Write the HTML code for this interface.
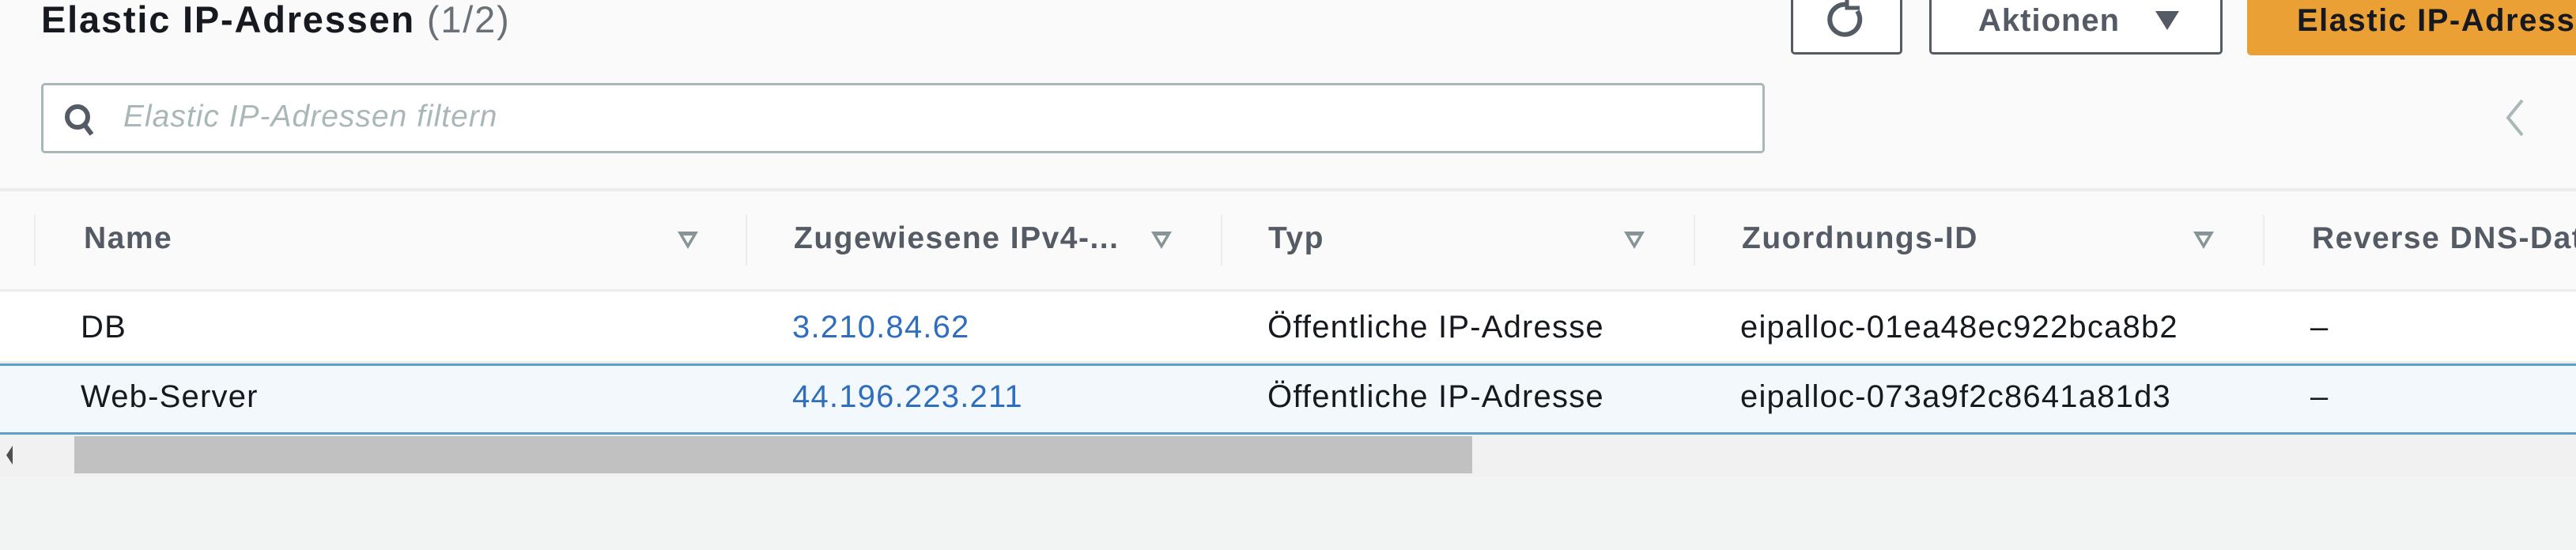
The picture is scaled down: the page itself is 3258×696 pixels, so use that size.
<!DOCTYPE html>
<html><head><meta charset="utf-8"><style>
*{margin:0;padding:0;box-sizing:border-box}
body{width:3258px;height:696px;overflow:hidden;background:#f2f3f3;font-family:"Liberation Sans",sans-serif;position:relative}
.a{position:absolute;white-space:nowrap}
.tri{position:absolute;width:0;height:0;border-left:13px solid transparent;border-right:13px solid transparent;border-top:22px solid #879596}
.tri:after{content:"";position:absolute;left:-6px;top:-17px;border-left:6px solid transparent;border-right:6px solid transparent;border-top:10px solid #fafafa}
.sep{position:absolute;top:272px;width:2px;height:64px;background:#eaeded}
.h{font-size:39px;font-weight:bold;color:#545b64;top:280px;letter-spacing:1.5px}
.c{font-size:40px;color:#16191f;letter-spacing:1.2px}
.l{color:#2f6ebf}
</style></head><body>
<div class="a" style="left:0;top:0;width:3258px;height:552px;background:#fafafa"></div>
<div class="a" style="left:52px;top:-3px;font-size:47px;font-weight:bold;color:#16191f;letter-spacing:1.8px">Elastic IP-Adressen <span style="font-weight:normal;color:#687078">(1/2)</span></div>
<!-- buttons -->
<div class="a" style="left:2265px;top:-6px;width:141px;height:75px;border:3px solid #545b64;border-radius:5px;background:#fff"></div>
<svg class="a" style="left:2309px;top:0" width="54" height="52" viewBox="0 0 54 52"><path d="M40 14 A19 19 0 1 1 28 6" fill="none" stroke="#545b64" stroke-width="6"/><path d="M27 0 V10 H43" fill="none" stroke="#545b64" stroke-width="5"/></svg>
<div class="a" style="left:2440px;top:-6px;width:371px;height:75px;border:3px solid #545b64;border-radius:5px;background:#fff"></div>
<div class="a" style="left:2502px;top:4px;font-size:40px;font-weight:bold;color:#545b64;letter-spacing:1px">Aktionen</div>
<div class="a" style="left:2726px;top:14px;border-left:15px solid transparent;border-right:15px solid transparent;border-top:24px solid #545b64"></div>
<div class="a" style="left:2842px;top:-6px;width:430px;height:76px;background:#eaa034;border-radius:5px"></div>
<div class="a" style="left:2905px;top:4px;font-size:40px;font-weight:bold;color:#16191f;letter-spacing:1.5px">Elastic IP-Adressen</div>
<!-- search -->
<div class="a" style="left:52px;top:105px;width:2180px;height:89px;border:3px solid #aab7b8;border-radius:5px;background:#fff"></div>
<svg class="a" style="left:78px;top:128px" width="48" height="48" viewBox="0 0 48 48"><circle cx="20" cy="20" r="13" fill="none" stroke="#545b64" stroke-width="6"/><path d="M29 30 L38 42" stroke="#545b64" stroke-width="6"/></svg>
<div class="a" style="left:156px;top:126px;font-size:39px;font-style:italic;color:#aab7b8;letter-spacing:1px">Elastic IP-Adressen filtern</div>
<svg class="a" style="left:3164px;top:124px" width="34" height="50" viewBox="0 0 34 50"><path d="M26 3 L8 25 L26 47" fill="none" stroke="#aab7b8" stroke-width="4"/></svg>
<!-- header -->
<div class="a" style="left:0;top:238px;width:3258px;height:4px;background:#eaeded"></div>
<div class="a" style="left:0;top:366px;width:3258px;height:3px;background:#eaeded"></div>
<div class="sep" style="left:43px"></div><div class="sep" style="left:943px"></div><div class="sep" style="left:1544px"></div><div class="sep" style="left:2142px"></div><div class="sep" style="left:2862px"></div>
<div class="a h" style="left:106px">Name</div>
<div class="a h" style="left:1004px">Zugewiesene IPv4-...</div>
<div class="a h" style="left:1604px">Typ</div>
<div class="a h" style="left:2203px">Zuordnungs-ID</div>
<div class="a h" style="left:2924px">Reverse DNS-Datensatz</div>
<div class="tri" style="left:857px;top:293px"></div>
<div class="tri" style="left:1456px;top:293px"></div>
<div class="tri" style="left:2054px;top:293px"></div>
<div class="tri" style="left:2774px;top:293px"></div>
<!-- rows -->
<div class="a" style="left:0;top:369px;width:3258px;height:88px;background:#fff"></div>
<div class="a" style="left:0;top:457px;width:3258px;height:3px;background:#eaeded"></div>
<div class="a" style="left:0;top:460px;width:3258px;height:3px;background:#5aa0c8"></div>
<div class="a" style="left:0;top:463px;width:3258px;height:84px;background:#f3f8fd"></div>
<div class="a" style="left:0;top:547px;width:3258px;height:3px;background:#5aa0c8"></div>
<div class="a c" style="left:102px;top:392px">DB</div>
<div class="a c l" style="left:1002px;top:392px">3.210.84.62</div>
<div class="a c" style="left:1603px;top:392px">Öffentliche IP-Adresse</div>
<div class="a c" style="left:2201px;top:392px">eipalloc-01ea48ec922bca8b2</div>
<div class="a c" style="left:2922px;top:392px">–</div>
<div class="a c" style="left:102px;top:480px">Web-Server</div>
<div class="a c l" style="left:1002px;top:480px">44.196.223.211</div>
<div class="a c" style="left:1603px;top:480px">Öffentliche IP-Adresse</div>
<div class="a c" style="left:2201px;top:480px">eipalloc-073a9f2c8641a81d3</div>
<div class="a c" style="left:2922px;top:480px">–</div>
<!-- scrollbar -->
<div class="a" style="left:0;top:550px;width:3258px;height:52px;background:#f1f1f1"></div>
<div class="a" style="left:94px;top:552px;width:1768px;height:47px;background:#c1c1c1"></div>
<div class="a" style="left:8px;top:564px;border-top:12px solid transparent;border-bottom:12px solid transparent;border-right:8px solid #505050"></div>
</body></html>
